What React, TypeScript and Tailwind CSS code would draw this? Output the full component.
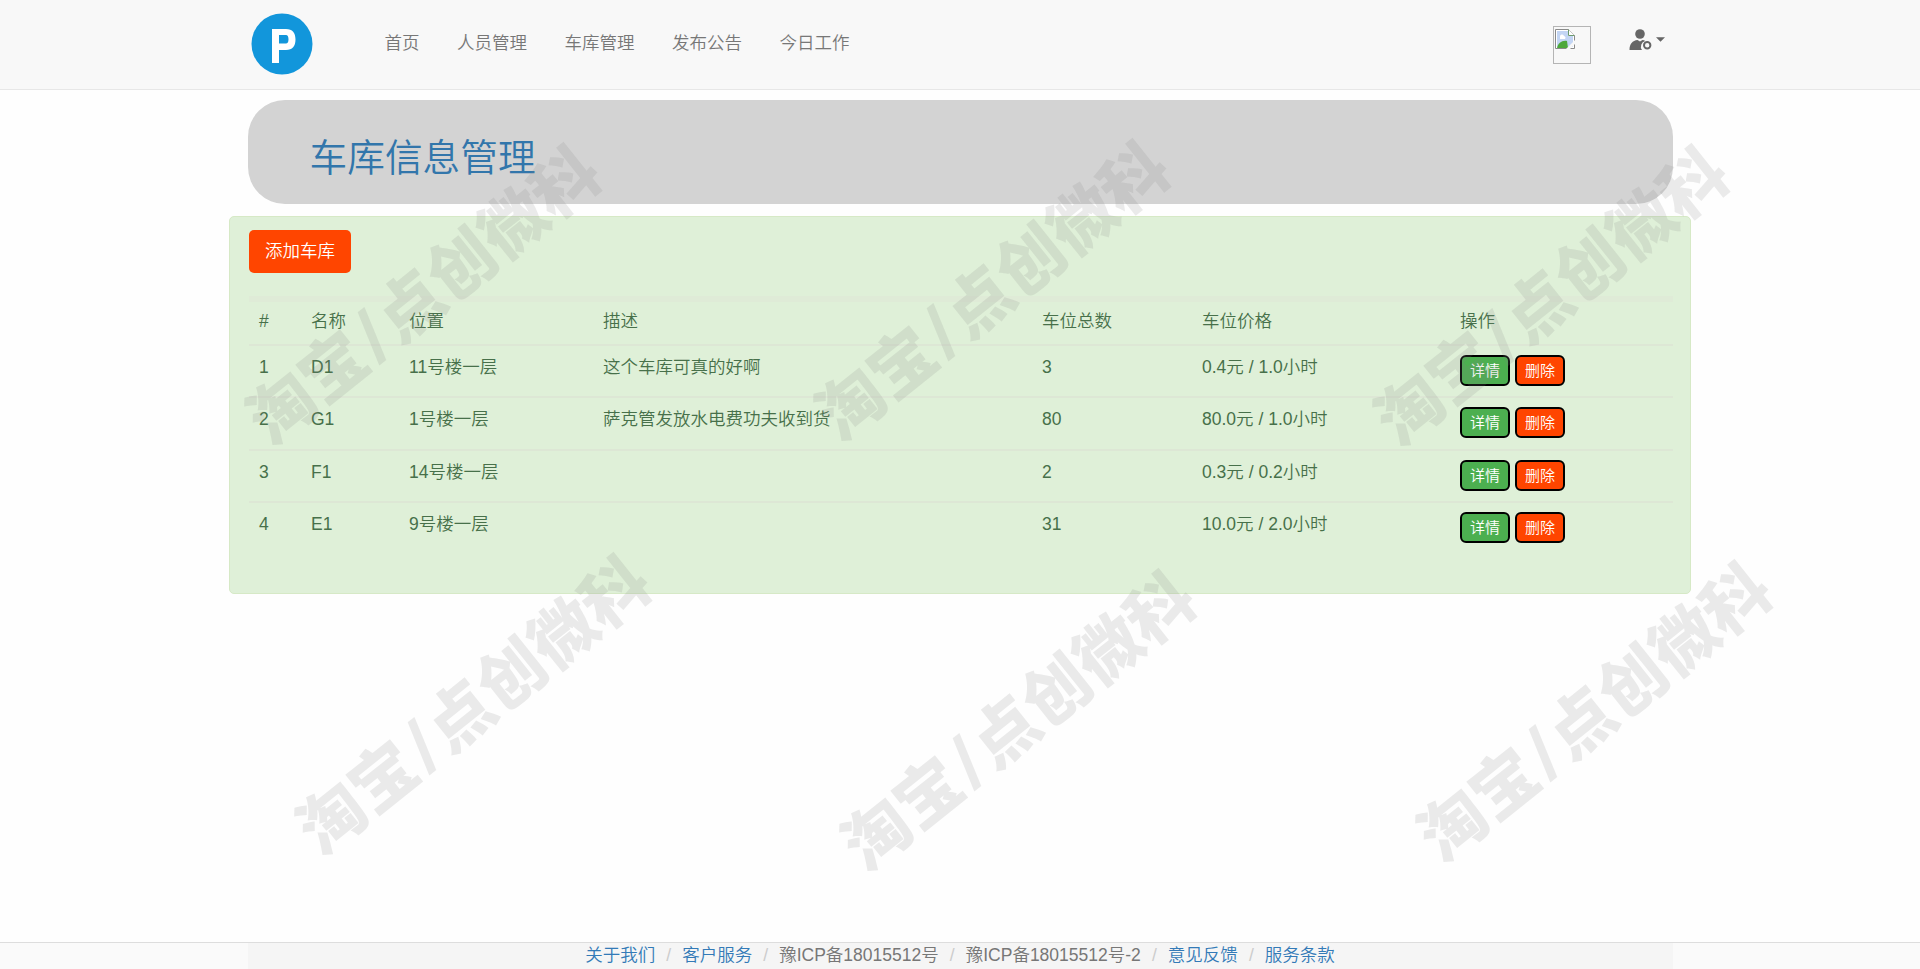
const navItems = ['首页', '人员管理', '车库管理', '发布公告', '今日工作']

const columns = [
  { label: '#', width: 'w-[52px]' },
  { label: '名称', width: 'w-[98px]' },
  { label: '位置', width: 'w-[194px]' },
  { label: '描述', width: 'w-[439px]' },
  { label: '车位总数', width: 'w-[160px]' },
  { label: '车位价格', width: 'w-[258px]' },
  { label: '操作', width: '' },
]

const garages = [
  { id: 1, name: 'D1', location: '11号楼一层', description: '这个车库可真的好啊', total: 3, price: '0.4元 / 1.0小时' },
  { id: 2, name: 'G1', location: '1号楼一层', description: '萨克管发放水电费功夫收到货', total: 80, price: '80.0元 / 1.0小时' },
  { id: 3, name: 'F1', location: '14号楼一层', description: '', total: 2, price: '0.3元 / 0.2小时' },
  { id: 4, name: 'E1', location: '9号楼一层', description: '', total: 31, price: '10.0元 / 2.0小时' },
]

const footerItems = [
  { label: '关于我们', link: true },
  { label: '客户服务', link: true },
  { label: '豫ICP备18015512号', link: false },
  { label: '豫ICP备18015512号-2', link: false },
  { label: '意见反馈', link: true },
  { label: '服务条款', link: true },
]

const watermarks = [
  'left-[424px] top-[296px]',
  'left-[993px] top-[292px]',
  'left-[1552px] top-[297px]',
  'left-[474px] top-[706px]',
  'left-[1019px] top-[722px]',
  'left-[1595px] top-[713px]',
]

function Logo() {
  return (
    <svg className="h-[62px] w-[62px]" viewBox="0 0 62 62">
      <circle cx="31" cy="31" r="30.5" fill="#1296db" />
      <path
        fill="#fff"
        fillRule="evenodd"
        d="M21 16h14c6.500 0 9.500 4 9.500 10.500S41.500 37 35 37h-7v13h-7zM28 22v8.500h7c1.500 0 2.500-1.300 2.500-4.200S36.500 22 35 22z"
      />
    </svg>
  )
}

function BrokenImage() {
  return (
    <div className="h-[38px] w-[38px] border border-[#b5b5b5] px-px py-0.5">
      <svg className="h-5 w-5" viewBox="0 0 20 20">
        <path d="M.5.5h13l6 6v13H.5z" fill="#fff" stroke="#8a8a8a" />
        <path d="M2 2h11v5h5v11H2z" fill="#c3d5f4" />
        <path d="M5 8a2 2 0 0 1 4-1 2 2 0 0 1 1 3H5z" fill="#fff" />
        <path d="M2 19c1-5 5-8 10-7l1 7z" fill="#4ea83c" />
        <path d="M20 11v4l-5 5h-4z" fill="#f8f8f8" />
        <path d="M13.5.5v6h6" fill="#fff" stroke="#6d9a6d" />
      </svg>
    </div>
  )
}

function UserMenu() {
  return (
    <div className="flex items-start text-[#666]">
      <svg className="h-[22px] w-[23px]" viewBox="0 0 23 22" fill="currentColor">
        <circle cx="11" cy="5" r="4.800" />
        <path d="M.5 21c0-6 3-9.500 8-10l2.500 1.500L13.500 11c1 .1 2 .5 2.700 1A5.800 5.800 0 0 0 13 21z" />
        <circle cx="18.200" cy="16.300" r="3.200" fill="none" stroke="currentColor" strokeWidth="2" />
      </svg>
      <svg className="mt-[8px] ml-[4px] h-[5px] w-[9px]" viewBox="0 0 10 5" fill="currentColor">
        <path d="M0 0h10L5 5z" />
      </svg>
    </div>
  )
}

function Navbar() {
  return (
    <nav className="h-[90px] shrink-0 border-b border-[#e7e7e7] bg-[#f8f8f8]">
      <div className="mx-auto flex w-[1425px] items-start">
        <div className="ml-[3px] mt-[13px]">
          <Logo />
        </div>
        <ul className="mt-[31px] ml-[72px] flex gap-[37.5px] text-[#777]">
          {navItems.map((item) => (
            <li key={item}>{item}</li>
          ))}
        </ul>
        <div className="mt-[26px] ml-auto">
          <BrokenImage />
        </div>
        <div className="mt-[29px] mr-[8px] ml-[38px]">
          <UserMenu />
        </div>
      </div>
    </nav>
  )
}

function ActionButton({ label, color }: { label: string; color: string }) {
  return (
    <button className={`h-[31px] w-[50px] rounded-[6px] border-2 border-black text-[15px] leading-none text-white ${color}`}>
      {label}
    </button>
  )
}

function GarageTable() {
  return (
    <table className="mt-[23px] w-full table-fixed border-t-[6px] border-[#dfebd7] text-left">
      <thead>
        <tr className="h-[46px] align-top">
          {columns.map((col) => (
            <th key={col.label} className={`pt-[7px] pl-[10px] font-[350] ${col.width}`}>
              {col.label}
            </th>
          ))}
        </tr>
      </thead>
      <tbody>
        {garages.map((garage) => (
          <tr key={garage.id} className="h-[52.3px] border-t-2 border-[#dde7d5] align-top">
            <td className="pt-[9px] pl-[10px]">{garage.id}</td>
            <td className="pt-[9px] pl-[10px]">{garage.name}</td>
            <td className="pt-[9px] pl-[10px]">{garage.location}</td>
            <td className="pt-[9px] pl-[10px]">{garage.description}</td>
            <td className="pt-[9px] pl-[10px]">{garage.total}</td>
            <td className="pt-[9px] pl-[10px]">{garage.price}</td>
            <td className="pt-[9px] pl-[10px]">
              <div className="flex gap-[5px]">
                <ActionButton label="详情" color="bg-[#4caf50]" />
                <ActionButton label="删除" color="bg-[#ff4500]" />
              </div>
            </td>
          </tr>
        ))}
      </tbody>
    </table>
  )
}

function Footer() {
  return (
    <footer className="mt-auto h-[27px] shrink-0 overflow-hidden border-t border-[#ddd] bg-[#fafafa]">
      <ol className="mx-auto flex h-full w-[1425px] justify-center bg-[#f5f5f5] leading-[24px] text-[#777]">
        {footerItems.map((item, i) => (
          <li key={item.label} className="flex">
            {i > 0 && <span className="w-[27px] text-center text-[#ccc]">/</span>}
            <span className={item.link ? 'text-[#337ab7]' : ''}>{item.label}</span>
          </li>
        ))}
      </ol>
    </footer>
  )
}

export default function App() {
  return (
    <div className="relative flex h-[969px] w-[1920px] flex-col overflow-hidden bg-[#fefefe] font-['Liberation_Sans','Noto_Sans_CJK_SC',sans-serif] text-[17.5px] leading-[25px] font-[350]">
      <Navbar />
      <header className="mx-auto mt-[10px] flex h-[104px] w-[1425px] shrink-0 items-center rounded-[37px] bg-[#d3d3d3] pl-[62px]">
        <h1 className="pt-[12px] text-[37.7px] leading-[42px] text-[#3276ab]">车库信息管理</h1>
      </header>
      <main className="mx-auto mt-[12px] h-[378px] w-[1462px] shrink-0 rounded-[5px] border border-[#d6e9c6] bg-[#dff0d8] pr-[17px] pl-[19px] pt-[13px] text-[#47704a]">
        <button className="block h-[43px] w-[102px] rounded-[5px] bg-[#ff4500] pb-px text-white">添加车库</button>
        <GarageTable />
      </main>
      <Footer />
      {watermarks.map((place) => (
        <div
          key={place}
          className={`pointer-events-none absolute flex -translate-x-1/2 -translate-y-1/2 -rotate-[38.6deg] items-center text-[66px] leading-none font-black whitespace-nowrap text-[#808080]/16 ${place}`}
        >
          <span>淘宝</span>
          <span className="w-[32px] text-center text-[74px] skew-x-[-6deg]">/</span>
          <span>点创微科</span>
        </div>
      ))}
    </div>
  )
}
